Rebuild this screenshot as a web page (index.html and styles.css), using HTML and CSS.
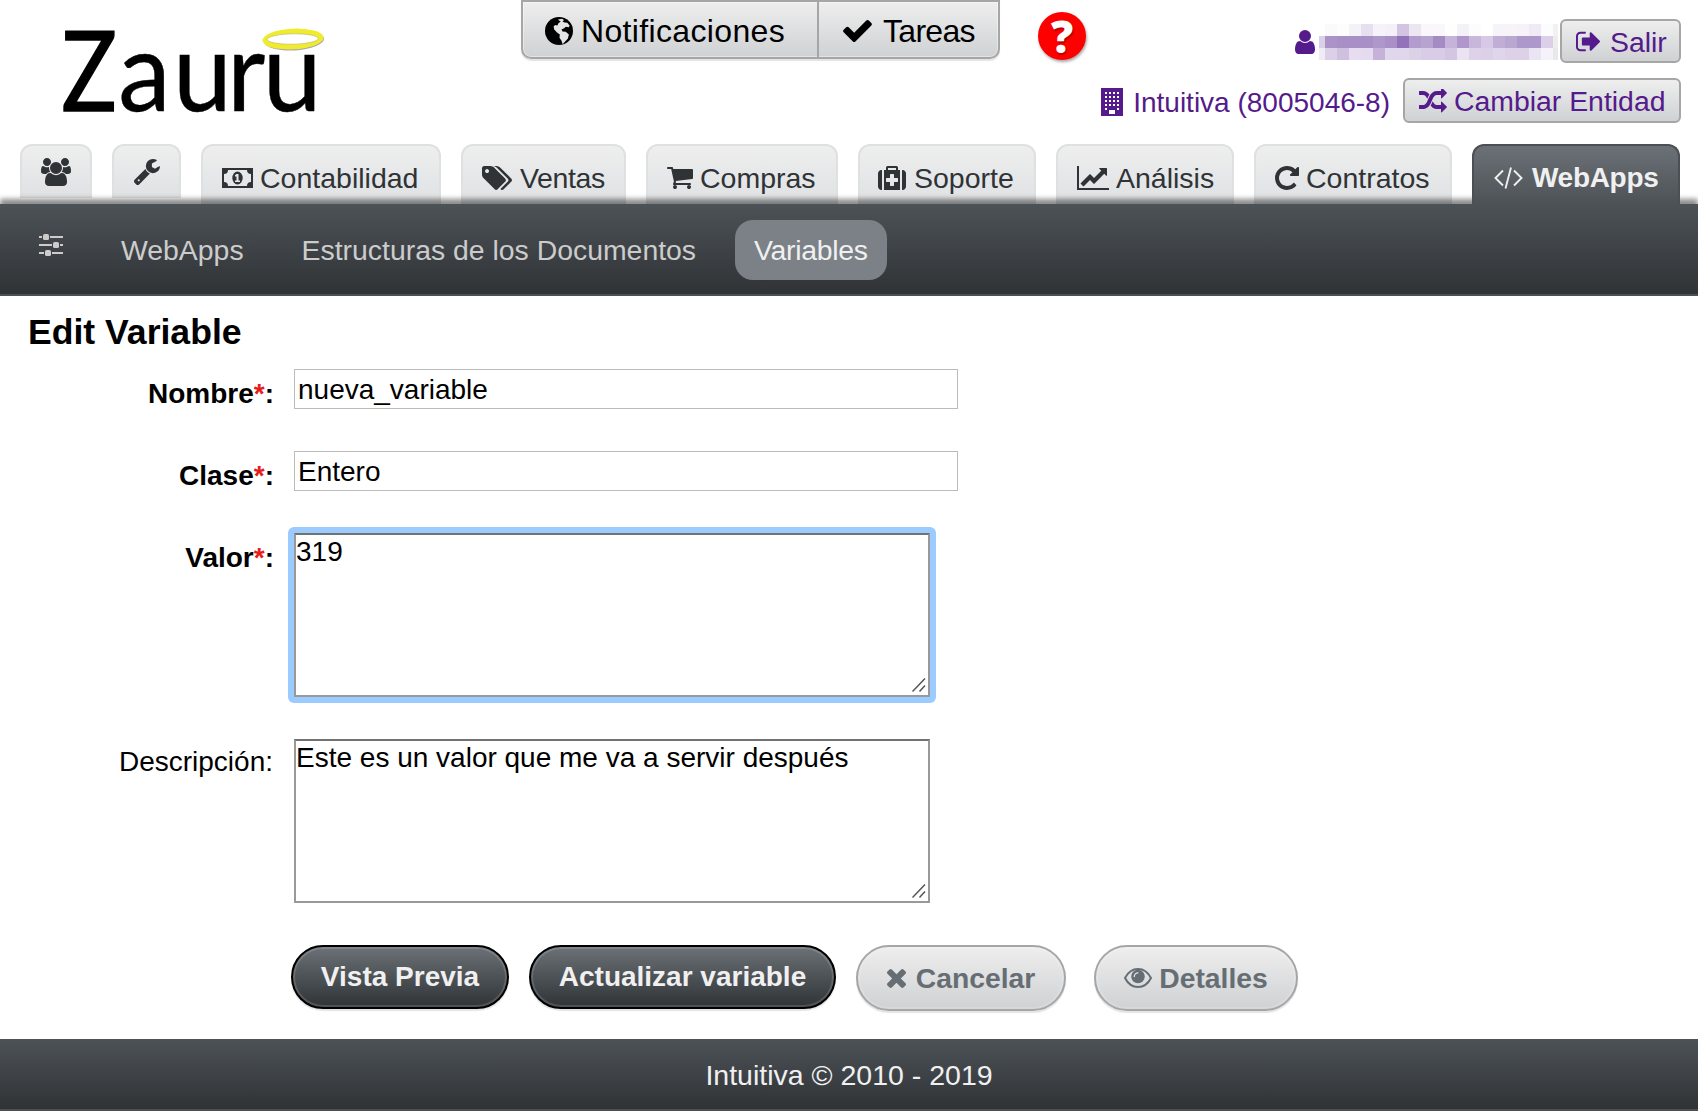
FILE: index.html
```
<!DOCTYPE html>
<html lang="es">
<head>
    <meta charset="UTF-8">
    <meta name="viewport" content="width=device-width, initial-scale=1.0">
    <title>Zauru - Edit Variable</title>
    <link rel="stylesheet" href="styles.css">
</head>
<body>
    <header class="header">
        <a class="logo">
            <svg width="340" height="143" viewBox="0 0 340 143">
                <text y="111.300" x="74" transform="scale(.83 1)" class="logo-z">Z</text>
                <text y="111.300" x="124.500 182 239 276.500" transform="scale(.95 1)" class="logo-text">auru</text>
                <ellipse cx="294" cy="40" rx="30" ry="10.500" fill="#aaa" transform="rotate(-3 293 39)"/>
                <ellipse cx="293" cy="39" rx="30.500" ry="10.300" fill="#f0ec2d" transform="rotate(-3 293 39)"/>
                <ellipse cx="292.700" cy="39" rx="25.500" ry="5.200" fill="#fff" stroke="#b5b26a" stroke-width=".6" transform="rotate(-1 293 39)"/>
            </svg>
        </a>
        <div class="quick">
            <a class="quick-item quick-notif">
                <svg width="28" height="28" viewBox="0 0 28 28"><circle cx="14" cy="14" r="14"/><path fill="#e4e4e5" d="M13 2.5l4-.7 2 1.200-1.500 1.600 2 1 2.800.2 2.400 3-1 1.500-2.800-.6-1.800 1.500-2.600 1.200 1 2 3.200.4 3.200 2.600-1 4-3 3.400-2.200 2.400-1.200-3.400-2-3 .3-3.200-2.800-2-2.800-3.200-.6-3 1.600-1.400 2.200.6 1-2.400 2.400-1.600-1.800-1z"/></svg>
                <span>Notificaciones</span>
            </a>
            <a class="quick-item quick-tasks">
                <svg width="29" height="22" viewBox="120 334 1552 1188"><path d="M1671 566q0 40-28 68l-724 724-136 136q-28 28-68 28t-68-28l-136-136-362-362q-28-28-28-68t28-68l136-136q28-28 68-28t68 28l294 295 656-657q28-28 68-28t68 28l136 136q28 28 28 68z"/></svg>
                <span>Tareas</span>
            </a>
        </div>
        <a class="help">?</a>
        <div class="account">
            <div class="account-row row-user">
                <svg width="20" height="24" viewBox="256 128 1280 1536"><path d="M1536 1399q0 109-62.5 187t-150.500 78h-854q-88 0-150.500-78t-62.500-187q0-85 8.500-160.500t31.500-152 58.500-131 94-89 134.500-34.500q131 128 313 128t313-128q76 0 134.500 34.500t94 89 58.500 131 31.500 152 8.500 160.500zm-256-887q0 159-112.500 271.500t-271.500 112.500-271.500-112.500-112.500-271.500 112.500-271.500 271.500-112.500 271.500 112.500 112.500 271.500z"/></svg>
                <div class="username">
                    <div class="px px1"></div>
                    <div class="px px2"></div>
                    <div class="px px3"></div>
                </div>
                <a class="small-btn btn-exit">
                    <svg width="24" height="21" viewBox="64 256 1568 1280"><path d="M704 1440q0 4 1 20t.5 26.500-3 23.500-10 19.500-20.500 6.500h-320q-119 0-203.500-84.500t-84.500-203.500v-704q0-119 84.500-203.500t203.500-84.500h320q13 0 22.500 9.500t9.500 22.500q0 4 1 20t.5 26.500-3 23.500-10 19.500-20.500 6.500h-320q-66 0-113 47t-47 113v704q0 66 47 113t113 47h312l11.500 1 11.500 3 8 5.500 7 9 2 13.500zm928-544q0 26-19 45l-544 544q-19 19-45 19t-45-19-19-45v-288h-448q-26 0-45-19t-19-45v-384q0-26 19-45t45-19h448v-288q0-26 19-45t45-19 45 19l544 544q19 19 19 45z"/></svg>
                    <span>Salir</span>
                </a>
            </div>
            <div class="account-row row-entity">
                <svg width="22" height="28" viewBox="0 0 22 28"><path fill-rule="evenodd" d="M0 0h22v28H0zM4 4v2h2V4zM8 4v2h2V4zM12 4v2h2V4zM16 4v2h2V4zM4 8v2h2V8zM8 8v2h2V8zM12 8v2h2V8zM16 8v2h2V8zM4 12v2h2v-2zM8 12v2h2v-2zM12 12v2h2v-2zM16 12v2h2v-2zM4 16v2h2v-2zM8 16v2h2v-2zM12 16v2h2v-2zM16 16v2h2v-2zM4 20v2h2v-2zM16 20v2h2v-2zM8 22v4h6v-4z"/></svg>
                <span class="entity">Intuitiva (8005046-8)</span>
                <a class="small-btn btn-switch">
                    <svg width="28" height="24" viewBox="0 160 1792 1472"><path d="M666 481q-60 92-137 273-22-45-37-72.500t-40.500-63.500-51-56.500-63-35-81.500-14.500h-224q-14 0-23-9t-9-23v-192q0-14 9-23t23-9h224q250 0 410 225zm1126 799q0 14-9 23l-320 320q-9 9-23 9-13 0-22.500-9.500t-9.500-22.500v-192q-32 0-85 .5t-81 1-73-1-71-5-64-10.500-63-18.500-58-28.500-59-40-55-53.500-56-69.500q59-93 136-273 22 45 37 72.500t40.500 63.500 51 56.500 63 35 81.500 14.500h256v-192q0-14 9-23t23-9q12 0 24 10l319 319q9 9 9 23zm0-896q0 14-9 23l-320 320q-9 9-23 9-13 0-22.500-9.500t-9.500-22.500v-192h-256q-48 0-87 15t-69 45-51 61.500-45 77.500q-32 62-78 171-29 66-49.500 111t-54 105-64 100-74 83-90 68.500-106.500 42-128 16.500h-224q-14 0-23-9t-9-23v-192q0-14 9-23t23-9h224q48 0 87-15t69-45 51-61.500 45-77.500q32-62 78-171 29-66 49.500-111t54-105 64-100 74-83 90-68.500 106.500-42 128-16.500h256v-192q0-14 9-23t23-9q12 0 24 10l319 319q9 9 9 23z"/></svg>
                    <span>Cambiar Entidad</span>
                </a>
            </div>
        </div>
    </header>

    <nav class="tabs">
        <a class="tab tab-short tab-users">
            <svg width="30" height="28" viewBox="-64 0 1920 1792"><path d="M529 896q-162 5-265 128h-134q-82 0-138-40.500t-56-118.500q0-353 124-353 6 0 43.500 21t97.500 42.500 119 21.500q67 0 133-23-5 37-5 66 0 139 81 256zm1071 637q0 120-73 189.500t-194 69.500h-874q-121 0-194-69.500t-73-189.500q0-53 3.500-103.500t14-109 26.500-108.500 43-97.500 62-81 85.500-53.500 111.500-20q10 0 43 21.500t73 48 107 48 135 21.500 135-21.500 107-48 73-48 43-21.500q61 0 111.500 20t85.500 53.500 62 81 43 97.500 26.500 108.500 14 109 3.500 103.500zm-1024-1277q0 106-75 181t-181 75-181-75-75-181 75-181 181-75 181 75 75 181zm704 384q0 159-112.500 271.500t-271.500 112.500-271.500-112.500-112.500-271.500 112.500-271.500 271.500-112.500 271.500 112.500 112.500 271.500zm576 225q0 78-56 118.500t-138 40.500h-134q-103-123-265-128 81-117 81-256 0-29-5-66 66 23 133 23 59 0 119-21.500t97.500-42.500 43.500-21q124 0 124 353zm-128-609q0 106-75 181t-181 75-181-75-75-181 75-181 181-75 181 75 75 181z"/></svg>
        </a>
        <a class="tab tab-short tab-tools">
            <svg width="26" height="26" viewBox="85 128 1643 1643"><path d="M448 1472q0-26-19-45t-45-19-45 19-19 45 19 45 45 19 45-19 19-45zm644-420l-682 682q-37 37-90 37-52 0-91-37l-106-108q-38-36-38-90 0-53 38-91l681-681q39 98 114.500 173.500t173.500 114.500zm634-435q0 39-23 106-47 134-164.500 217.500t-258.500 83.500q-185 0-316.500-131.500t-131.500-316.500 131.500-316.500 316.500-131.500q58 0 121.500 16.500t107.500 46.500q16 11 16 28t-16 28l-293 169v224l193 107q5-3 79-48.500t135.500-81 70.500-35.500q15 0 23.500 10t8.500 25z"/></svg>
        </a>
        <a class="tab tab-accounting">
            <svg width="31" height="20" viewBox="0 0 31 20"><path fill-rule="evenodd" d="M0 0h31v20H0zM6 2A4 4 0 0 1 2 6v8a4 4 0 0 1 4 4h19a4 4 0 0 1 4-4V6a4 4 0 0 1-4-4z"/><ellipse cx="15.500" cy="10" rx="5.200" ry="6.500"/><path fill="#e8e9e9" d="M14.500 6h2v6.500H18V14h-5v-1.500h1.500V8.500H13V7.300z"/></svg>
            <span>Contabilidad</span>
        </a>
        <a class="tab tab-sales">
            <svg width="30" height="24" viewBox="-64 128 1900 1516"><path d="M384 448q0-53-37.500-90.500t-90.500-37.500-90.500 37.500-37.500 90.500 37.500 90.500 90.500 37.500 90.500-37.500 37.500-90.500zm1067 576q0 53-37 90l-491 492q-39 37-91 37-53 0-90-37l-715-716q-38-37-64.500-101t-26.500-117v-416q0-52 38-90t90-38h416q53 0 117 26.500t102 64.500l715 714q37 39 37 91zm384 0q0 53-37 90l-491 492q-39 37-91 37-36 0-59-14t-53-45l470-470q37-37 37-90 0-52-37-91l-715-714q-38-38-102-64.500t-117-26.500h224q53 0 117 26.500t102 64.500l715 714q37 39 37 91z"/></svg>
            <span>Ventas</span>
        </a>
        <a class="tab tab-purchases">
            <svg width="26" height="22" viewBox="64 256 1664 1408"><path d="M704 1536q0 52-38 90t-90 38-90-38-38-90 38-90 90-38 90 38 38 90zm896 0q0 52-38 90t-90 38-90-38-38-90 38-90 90-38 90 38 38 90zm128-1088v512q0 24-16.500 42.500t-40.500 21.500l-1044 122q13 60 13 70 0 16-24 64h920q26 0 45 19t19 45-19 45-45 19h-1024q-26 0-45-19t-19-45q0-11 8-31.500t16-36 21.500-40 15.500-29.500l-177-823h-204q-26 0-45-19t-19-45 19-45 45-19h256q16 0 28.500 6.500t19.500 15.500 13 24.500 8 26 5.500 29.500 4.500 26h1201q26 0 45 19t19 45z"/></svg>
            <span>Compras</span>
        </a>
        <a class="tab tab-support">
            <svg width="28" height="24" viewBox="0 128 1792 1536"><path fill-rule="evenodd" d="M1280 1120v-192q0-14-9-23t-23-9h-224v-224q0-14-9-23t-23-9h-192q-14 0-23 9t-9 23v224h-224q-14 0-23 9t-9 23v192q0 14 9 23t23 9h224v224q0 14 9 23t23 9h192q14 0 23-9t9-23v-224h224q14 0 23-9t9-23zm-640-736h512v-128h-512v128zm-384 0v1280h-32q-92 0-158-66t-66-158v-832q0-92 66-158t158-66h32zm1152 0v1280h-1024v-1280h128v-160q0-40 28-68t68-28h576q40 0 68 28t28 68v160h128zm384 224v832q0 92-66 158t-158 66h-32v-1280h32q92 0 158 66t66 158z"/></svg>
            <span>Soporte</span>
        </a>
        <a class="tab tab-analysis">
            <svg width="32" height="24" viewBox="0 128 2048 1536"><path d="M2048 1536v128h-2048v-1536h128v1408h1920zm-128-1248v435q0 21-19.500 29.500t-35.500-7.500l-121-121-633 633q-10 10-23 10t-23-10l-233-233-416 416-192-192 585-585q10-10 23-10t23 10l233 233 464-464-121-121q-16-16-7.500-35.500t29.500-19.500h435q14 0 23 9t9 23z"/></svg>
            <span>Análisis</span>
        </a>
        <a class="tab tab-contracts">
            <svg width="24" height="24" viewBox="128 128 1536 1536"><path d="M1664 256v448q0 26-19 45t-45 19h-448q-42 0-59-40-17-39 14-69l138-138q-148-137-349-137-104 0-198.500 40.500t-163.500 109.500-109.500 163.500-40.500 198.500 40.500 198.500 109.500 163.500 163.500 109.500 198.500 40.500q119 0 225-52t179-147q7-10 23-12 15 0 25 9l137 138q9 8 9.500 20.500t-7.500 22.500q-109 132-264 204.500t-327 72.500q-156 0-298-61t-245-164-164-245-61-298 61-298 164-245 245-164 298-61q147 0 284.500 55.500t244.500 156.500l130-129q29-31 70-14 39 17 39 59z"/></svg>
            <span>Contratos</span>
        </a>
        <a class="tab tab-webapps active">
            <svg width="29" height="22" viewBox="0 0 29 22"><path fill="none" stroke="#f0f0f0" stroke-width="1.900" d="M9 3.500L1.500 11 9 18.500M20 3.500l7.500 7.500-7.500 7.500M17 .5l-5.500 21"/></svg>
            <span>WebApps</span>
        </a>
    </nav>

    <nav class="subnav">
        <a class="subnav-icon">
            <svg width="24" height="23" viewBox="0 0 24 23"><path d="M0 2h3v2H0zM11 2h13v2H11zM0 10h13v2H0zM21 10h3v2h-3zM0 18h5v2H0zM13 18h11v2H13z"/><rect x="4" width="6" height="6" rx="1.500"/><rect x="14" y="8" width="6" height="6" rx="1.500"/><rect x="6" y="16" width="6" height="6" rx="1.500"/></svg>
        </a>
        <a class="subnav-link">WebApps</a>
        <a class="subnav-link">Estructuras de los Documentos</a>
        <a class="subnav-link current">Variables</a>
    </nav>

    <main class="content">
        <h1>Edit Variable</h1>
        <form>
            <div class="field">
                <label class="required">Nombre<em>*</em>:</label>
                <input type="text" value="nueva_variable">
            </div>
            <div class="field">
                <label class="required">Clase<em>*</em>:</label>
                <input type="text" value="Entero">
            </div>
            <div class="field">
                <label class="required">Valor<em>*</em>:</label>
                <div class="area focused">
                    <textarea>319</textarea>
                    <svg class="grip" width="14" height="14" viewBox="0 0 14 14"><path d="M.5 13.500L13 .5M7.500 13.500l5.500-6"/></svg>
                </div>
            </div>
            <div class="field field-desc">
                <label>Descripción:</label>
                <div class="area">
                    <textarea>Este es un valor que me va a servir después</textarea>
                    <svg class="grip" width="14" height="14" viewBox="0 0 14 14"><path d="M.5 13.500L13 .5M7.500 13.500l5.500-6"/></svg>
                </div>
            </div>
            <div class="actions">
                <a class="btn btn-preview">Vista Previa</a>
                <a class="btn btn-update">Actualizar variable</a>
                <a class="btn light btn-cancel">
                    <svg width="19" height="19" viewBox="302 366 1188 1188"><path d="M1490 1322q0 40-28 68l-136 136q-28 28-68 28t-68-28l-294-294-294 294q-28 28-68 28t-68-28l-136-136q-28-28-28-68t28-68l294-294-294-294q-28-28-28-68t28-68l136-136q28-28 68-28t68 28l294 294 294-294q28-28 68-28t68 28l136 136q28 28 28 68t-28 68l-294 294 294 294q28 28 28 68z"/></svg>
                    <span>Cancelar</span>
                </a>
                <a class="btn light btn-details">
                    <svg width="28" height="20" viewBox="0 0 28 20"><path d="M1 10C4 4.200 8.700 1 14 1s10 3.200 13 9c-3 5.800-7.700 9-13 9S4 15.800 1 10z" fill="none" stroke="#666e73" stroke-width="2"/><circle cx="14" cy="8.500" r="6.800"/><path d="M10.300 8.500A3.700 3.700 0 0 1 14 4.800" fill="none" stroke="#e0e1e2" stroke-width="1.300" stroke-linecap="round"/></svg>
                    <span>Detalles</span>
                </a>
            </div>
        </form>
    </main>

    <footer class="footer">Intuitiva © 2010 - 2019</footer>
</body>
</html>
```

FILE: styles.css
```
* {
    margin: 0;
    padding: 0;
    box-sizing: border-box;
}
body {
    background: #fff;
    color: #000;
    font-family: "Liberation Sans", Helvetica, Arial, sans-serif;
    font-size: 28px;
    line-height: 32px;
}
svg {
    display: block;
    flex-shrink: 0;
    fill: currentColor;
}
span {
    white-space: nowrap;
}

/* Header */
.header {
    display: flex;
    align-items: flex-start;
    height: 144px;
    padding-right: 17px;
}
.logo {
    width: 521px;
}
.logo-z,
.logo-text {
    font-family: Lato, sans-serif;
    font-size: 111px;
    stroke: #000;
    stroke-width: 0.4;
}
.logo-z {
    stroke-width: 1.5;
}
.quick {
    display: flex;
    height: 59px;
    border: 2px solid #a6a6a6;
    border-radius: 0 0 10px 10px;
    background: linear-gradient(#eee, #cfd1d3);
    box-shadow: 0 2px 1px #e4e4e4, inset 0 0 0 1px rgba(255, 255, 255, 0.4);
}
.quick-item {
    display: flex;
    align-items: center;
    gap: 8px;
    font-size: 32px;
    padding-top: 2px;
}
.quick-notif {
    width: 296px;
    padding-left: 22px;
    border-right: 2px solid #a6a6a6;
    letter-spacing: 0.35px;
}
.quick-tasks {
    width: 179px;
    padding-left: 24px;
    gap: 11px;
    letter-spacing: -0.7px;
}
.help {
    width: 48px;
    height: 48px;
    margin: 12px 0 0 38px;
    border-radius: 50%;
    background: #f00;
    color: #fff;
    font-family: "Open Sans", sans-serif;
    font-weight: 800;
    font-size: 44px;
    line-height: 48px;
    text-align: center;
    box-shadow: 1px 2px 3px rgba(0, 0, 0, 0.35);
    text-shadow: 1px 2px 2px rgba(0, 0, 0, 0.3);
}
.account {
    margin-left: auto;
    color: #551a8b;
}
.account-row {
    display: flex;
    align-items: center;
    justify-content: flex-end;
}
.row-user {
    margin-top: 19px;
    height: 44px;
}
.row-user > svg {
    margin-top: 2px;
}
.row-entity {
    margin-top: 15px;
    height: 45px;
}
.row-entity > svg {
    margin-top: 3px;
}
.username {
    width: 241px;
    height: 36px;
    margin: 2px 0 0 4px;
}
/* Hidden user name, drawn as blocks of 12px */
.px {
    height: 12px;
}
.px1 {
    background: linear-gradient(90deg, #fff 0 6px, #fafafc 0 18px, #fdfdfe 0 30px, #f4f1f9 0 42px, #e6dff0 0 54px, #f5f2f9 0 66px, #f4f0f9 0 78px, #d3c5e2 0 90px, #ece6f3 0 102px, #f9f7fb 0 126px, #fefefe 0 138px, #f4f1f8 0 150px, #fcfcfd 0 162px, #fff 0 174px, #f6f3f9 0 198px, #f5f2f9 0 210px, #efeaf5 0 222px, #fcfbfd 0 234px, #f1f1f1 0 239px, #fff 0);
}
.px2 {
    background: linear-gradient(90deg, #dcd0e8 0 6px, #ab93c8 0 18px, #a88fc5 0 54px, #ae97ca 0 66px, #aa90c6 0 78px, #9272b8 0 90px, #b29ccd 0 102px, #b7a3d0 0 114px, #a58bc3 0 126px, #c6b3da 0 138px, #b097cb 0 150px, #c8b6db 0 162px, #d7c9e5 0 174px, #c0aed6 0 186px, #b9a6d1 0 198px, #ae97cb 0 222px, #dccfe8 0 234px, #ededed 0 239px, #fff 0);
}
.px3 {
    background: linear-gradient(90deg, #f0ebf5 0 6px, #dbd0e8 0 18px, #cfc0e0 0 30px, #e6def0 0 42px, #e4dcee 0 54px, #c6b2d9 0 66px, #e0d7ec 0 90px, #dcd2e8 0 102px, #d8cce6 0 126px, #d3c6e2 0 138px, #eae3f2 0 150px, #ddd2e9 0 162px, #dcd0e8 0 174px, #e0d6eb 0 186px, #ddd1e8 0 210px, #ebe5f3 0 222px, #f5f2fa 0 234px, #e8e8e8 0 239px, #fff 0);
}
.small-btn {
    display: flex;
    align-items: center;
    height: 100%;
    border: 2px solid #a6a6a6;
    border-radius: 6px;
    background: linear-gradient(#eee, #cfd1d3);
    padding-top: 1px;
    font-size: 28.4px;
}
.btn-exit {
    width: 121px;
    padding-left: 14px;
    gap: 10px;
}
.btn-switch {
    width: 278px;
    padding-left: 14px;
    gap: 7px;
}
.entity {
    margin: 4px 13px 0 10px;
}

/* Main tabs */
.tabs {
    display: flex;
    align-items: flex-start;
    gap: 20px;
    height: 60px;
    padding-left: 20px;
}
.tab {
    display: flex;
    align-items: center;
    gap: 7px;
    height: 60px;
    padding: 6px 0 0 19px;
    border: 2px solid #dfe0e0;
    border-bottom: none;
    border-radius: 12px 12px 0 0;
    background: linear-gradient(#eee, #dfe1e3);
    color: #2f3336;
    font-size: 28.5px;
}
.tab-short {
    height: 54px;
    padding-top: 0;
}
.tab-users { width: 72px; }
.tab-tools { width: 69px; padding-left: 20px; }
.tab-accounting { width: 240px; }
.tab-sales { width: 165px; gap: 8px; letter-spacing: -0.4px; }
.tab-purchases { width: 192px; }
.tab-support { width: 178px; gap: 8px; padding-left: 18px; }
.tab-analysis { width: 178px; }
.tab-contracts { width: 198px; }
.tab-webapps { width: 208px; padding-left: 20px; gap: 9px; }
.tab.active {
    position: relative;
    z-index: 2;
    background: linear-gradient(#6b7176, #4d5257);
    border-color: #4b5055;
    color: #f0f0f0;
    font-weight: bold;
    font-size: 28px;
    letter-spacing: -0.3px;
}

/* Secondary menu */
.subnav {
    display: flex;
    position: relative;
    height: 92px;
    padding: 16px 0 0 39px;
    background: linear-gradient(#4d5257, #2f3336 90px);
    border-bottom: 2px solid #4b5055;
    box-shadow: 0 -5px 5px rgba(0, 0, 0, 0.45);
    color: #ccc;
    font-size: 28.4px;
}
.subnav-icon {
    padding: 14px 39px 0 0;
}
.subnav-link {
    height: 60px;
    line-height: 60px;
    padding: 0 19px;
    margin-right: 20px;
    white-space: nowrap;
}
.subnav-link.current {
    width: 152px;
    background: #7b8187;
    color: #f0f0f0;
    border-radius: 18px;
    letter-spacing: -0.3px;
}

/* Form */
.content {
    position: relative;
    z-index: 1;
    height: 743px;
    padding-top: 16px;
    background: #fff;
}
h1 {
    margin-left: 28px;
    font-size: 35.6px;
    line-height: 40px;
    margin-bottom: 17px;
}
.field {
    display: flex;
    align-items: flex-start;
    gap: 22px;
    margin-bottom: 42px;
}
label {
    width: 273px;
    padding-top: 10px;
    margin-right: -1px;
    line-height: 30px;
    text-align: right;
    white-space: nowrap;
}
.required {
    font-weight: bold;
    width: 274px;
    margin-right: -2px;
}
.field-desc label {
    padding-top: 8px;
}
em {
    color: #e81c1c;
    font-style: normal;
}
input,
textarea {
    display: block;
    font: inherit;
    color: #000;
    background: #fff;
    outline: none;
}
input {
    width: 664px;
    height: 40px;
    padding: 2px 3px 0;
    border: 1px solid #bbb;
}
.area {
    position: relative;
}
.area textarea {
    width: 636px;
    height: 164px;
    padding-top: 1px;
    border: 2px solid #999;
    border-top-color: #727272;
    resize: none;
    overflow: hidden;
}
.focused {
    margin: -6px;
    padding: 6px;
    border-radius: 6px;
    background: #9ccbff;
}
.grip {
    position: absolute;
    right: 4px;
    bottom: 5px;
    fill: none;
    stroke: #555;
    stroke-width: 1.5;
}
.focused .grip {
    right: 10px;
    bottom: 11px;
}
.actions {
    display: flex;
    align-items: flex-start;
    margin-left: 291px;
}
.btn {
    display: flex;
    align-items: center;
    justify-content: center;
    height: 64px;
    margin-right: 20px;
    border: 2px solid #000;
    border-radius: 32px;
    background: linear-gradient(#6b7176, #2f3336);
    box-shadow: inset 0 0 0 2px rgba(255, 255, 255, 0.15), 0 2px 1px #e4e4e4;
    color: #f0f0f0;
    font-weight: bold;
    font-size: 28px;
    white-space: nowrap;
}
.btn.light {
    height: 66px;
    border-color: #a6a6a6;
    border-radius: 33px;
    background: linear-gradient(#eee, #cfd1d3);
    color: #666e73;
    font-size: 28.3px;
}
.btn-preview { width: 218px; }
.btn-update { width: 307px; }
.btn-cancel { width: 210px; gap: 10px; }
.btn-details { width: 204px; gap: 7px; margin-left: 8px; }

.footer {
    height: 72px;
    line-height: 72px;
    text-align: center;
    background: linear-gradient(#4d5257, #2f3336 70px);
    border-bottom: 2px solid #4b5055;
    color: #f0f0f0;
    font-size: 28.5px;
}
```
